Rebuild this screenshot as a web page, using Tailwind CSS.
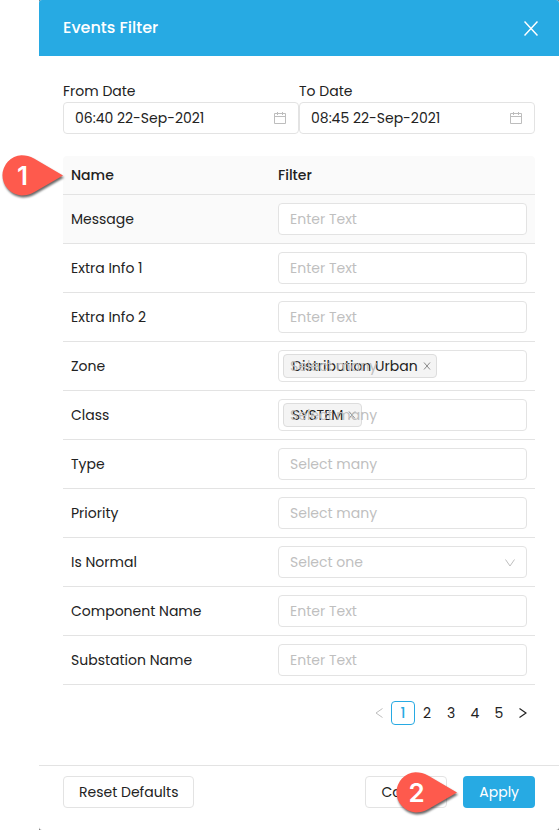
<!DOCTYPE html>
<html lang="en">
<head>
<meta charset="utf-8">
<meta name="viewport" content="width=device-width, initial-scale=1">
<title>Events Filter</title>
<script src="https://cdn.jsdelivr.net/npm/@tailwindcss/browser@4"></script>
</head>
<body class="bg-white pl-[39px] font-[Poppins,Inter,sans-serif] text-[14px] leading-[22px] text-[#222222]">
<svg class="hidden">
  <symbol id="calendar" viewBox="0 0 14 14"><path d="M1.500 2.500h11v10h-11zM1.500 5.500h11M4.500 1v3M9.500 1v3" fill="none" stroke="currentColor"/></symbol>
  <symbol id="close" viewBox="0 0 14 14"><path d="M.5 0 13.500 14M13.500 0 .5 14" fill="none" stroke="currentColor" stroke-width="1.500"/></symbol>
  <symbol id="remove" viewBox="0 0 8 8"><path d="M1 .5 7 7.500M7 .5 1 7.500" fill="none" stroke="currentColor"/></symbol>
  <symbol id="marker" viewBox="0 0 62 41"><path d="M62 20.500 33 37.200C29 39.500 25 40.500 20.500 40.500A20.500 20.200 0 0 1 20.500 .2C25 .2 29 1.300 33 3.500Z" fill="currentColor"/></symbol>
</svg>
<div class="bg-[#777777]">
<main class="flex min-h-screen flex-col overflow-hidden rounded-[3px] bg-white">
  <header class="flex h-14 items-center justify-between bg-[#27aae3] pr-[21px] pl-6 text-white">
    <h1 class="text-base font-medium">Events Filter</h1>
    <button type="button" aria-label="Close"><svg class="h-[15px] w-3.5"><use href="#close"/></svg></button>
  </header>

  <form class="flex grow flex-col">
    <div class="grow px-6 pt-6">
      <div class="grid grid-cols-2">
        <div>
          <label for="from" class="block">From Date</label>
          <div class="flex h-8 items-center rounded-[4px] border border-[#e3e3e3] px-[11px]">
            <input id="from" value="06:40 22-Sep-2021" class="min-w-0 grow outline-none">
            <svg class="size-3.5 shrink-0 text-[#bdbdbd]"><use href="#calendar"/></svg>
          </div>
        </div>
        <div>
          <label for="to" class="block">To Date</label>
          <div class="flex h-8 items-center rounded-[4px] border border-[#e3e3e3] px-[11px]">
            <input id="to" value="08:45 22-Sep-2021" class="min-w-0 grow outline-none">
            <svg class="size-3.5 shrink-0 text-[#bdbdbd]"><use href="#calendar"/></svg>
          </div>
        </div>
      </div>

      <div class="mt-[22px]">
        <table class="w-full table-fixed border-separate border-spacing-0 text-left [&_td]:h-[49px] [&_td]:border-b [&_td]:border-[#e3e3e3] [&_td]:px-2 [&_th]:border-b [&_th]:border-[#e3e3e3] [&_th]:px-2">
          <colgroup><col class="w-[207px]"><col></colgroup>
          <thead><tr class="h-[39px] bg-[#fafafa]"><th class="rounded-tl-[4px] font-medium">Name</th><th class="rounded-tr-[4px] font-medium">Filter</th></tr></thead>
          <tbody>
            <tr class="bg-[#fafafa]"><td><label for="message">Message</label></td><td><input id="message" placeholder="Enter Text" class="block h-8 w-full rounded-[4px] border border-[#e3e3e3] bg-white px-[11px] outline-none placeholder:text-[#bfbfbf]"></td></tr>
            <tr><td><label for="extra1">Extra Info 1</label></td><td><input id="extra1" placeholder="Enter Text" class="block h-8 w-full rounded-[4px] border border-[#e3e3e3] bg-white px-[11px] outline-none placeholder:text-[#bfbfbf]"></td></tr>
            <tr><td><label for="extra2">Extra Info 2</label></td><td><input id="extra2" placeholder="Enter Text" class="block h-8 w-full rounded-[4px] border border-[#e3e3e3] bg-white px-[11px] outline-none placeholder:text-[#bfbfbf]"></td></tr>
            <tr><td><label for="zone">Zone</label></td><td>
              <div class="relative flex h-8 items-center rounded-[4px] border border-[#e3e3e3] px-1">
                <span class="flex h-6 items-center gap-[5px] rounded-[4px] border border-[#dddddd] bg-[#f4f4f4] pr-[5px] pl-2">Distribution Urban<button type="button" aria-label="Remove Distribution Urban"><svg class="size-2 text-[#888888]"><use href="#remove"/></svg></button></span>
                <input id="zone" placeholder="Select many" class="pointer-events-none absolute inset-0 px-[11px] outline-none placeholder:text-[#bfbfbf]">
              </div></td></tr>
            <tr><td><label for="class">Class</label></td><td>
              <div class="relative flex h-8 items-center rounded-[4px] border border-[#e3e3e3] px-1">
                <span class="flex h-6 items-center gap-[5px] rounded-[4px] border border-[#dddddd] bg-[#f4f4f4] pr-[5px] pl-2">SYSTEM<button type="button" aria-label="Remove SYSTEM"><svg class="size-2 text-[#888888]"><use href="#remove"/></svg></button></span>
                <input id="class" placeholder="Select many" class="pointer-events-none absolute inset-0 px-[11px] outline-none placeholder:text-[#bfbfbf]">
              </div></td></tr>
            <tr><td><label for="type">Type</label></td><td><input id="type" placeholder="Select many" class="block h-8 w-full rounded-[4px] border border-[#e3e3e3] bg-white px-[11px] outline-none placeholder:text-[#bfbfbf]"></td></tr>
            <tr><td><label for="priority">Priority</label></td><td><input id="priority" placeholder="Select many" class="block h-8 w-full rounded-[4px] border border-[#e3e3e3] bg-white px-[11px] outline-none placeholder:text-[#bfbfbf]"></td></tr>
            <tr><td><label for="normal">Is Normal</label></td><td>
              <div class="relative">
                <select id="normal" class="block h-8 w-full appearance-none rounded-[4px] border border-[#e3e3e3] bg-white px-[11px] text-[#bfbfbf] outline-none"><option>Select one</option><option>Yes</option><option>No</option></select>
                <svg class="pointer-events-none absolute top-[13px] right-3 h-2 w-2.5 text-[#bfbfbf]" viewBox="0 0 10 8"><path d="M.5 .5 5 7 9.500 .5" fill="none" stroke="currentColor"/></svg>
              </div></td></tr>
            <tr><td><label for="component">Component Name</label></td><td><input id="component" placeholder="Enter Text" class="block h-8 w-full rounded-[4px] border border-[#e3e3e3] bg-white px-[11px] outline-none placeholder:text-[#bfbfbf]"></td></tr>
            <tr><td><label for="substation">Substation Name</label></td><td><input id="substation" placeholder="Enter Text" class="block h-8 w-full rounded-[4px] border border-[#e3e3e3] bg-white px-[11px] outline-none placeholder:text-[#bfbfbf]"></td></tr>
          </tbody>
        </table>
      </div>

      <nav aria-label="Pages" class="mt-4 flex justify-end [&>*]:flex [&>*]:size-6 [&>*]:items-center [&>*]:justify-center">
        <button type="button" disabled aria-label="Previous page" class="text-[#bfbfbf]"><svg class="h-2.5 w-2" viewBox="0 0 8 10"><path d="M7.500 .5 1 5 7.500 9.500" fill="none" stroke="currentColor"/></svg></button>
        <button type="button" class="rounded-[4px] border border-[#27aae3] font-medium text-[#27aae3]">1</button>
        <button type="button">2</button>
        <button type="button">3</button>
        <button type="button">4</button>
        <button type="button">5</button>
        <button type="button" aria-label="Next page"><svg class="h-2.5 w-2" viewBox="0 0 8 10"><path d="M.5 .5 7 5 .5 9.500" fill="none" stroke="currentColor" stroke-width="1.200"/></svg></button>
      </nav>
    </div>

    <footer class="flex h-[65px] justify-between border-t border-[#e3e3e3] px-6 pt-2.5">
      <button type="reset" class="h-8 rounded-[4px] border border-[#e3e3e3] px-[15px]">Reset Defaults</button>
      <div class="relative flex gap-4">
        <button type="button" class="h-8 rounded-[4px] border border-[#e3e3e3] px-[15px]">Cancel</button>
        <button type="submit" class="h-8 rounded-[4px] bg-[#27aae3] px-4 text-white">Apply</button>
        <div class="absolute -top-1 right-[78px] h-[41px] w-[62px] font-[Inter,sans-serif]">
          <svg class="size-full text-[#fe5a4d] drop-shadow-[1px_2px_1px_#00000099]"><use href="#marker"/></svg>
          <span class="absolute inset-y-0 left-0 flex w-[43px] items-center justify-center text-[26px] font-semibold text-white">2</span>
        </div>
      </div>
    </footer>
  </form>
</main>
</div>
<div class="absolute top-[155px] left-px h-[41px] w-[62px] font-[Inter,sans-serif]">
  <svg class="size-full text-[#fe5a4d] drop-shadow-[1px_2px_1px_#00000099]"><use href="#marker"/></svg>
  <span class="absolute inset-y-0 left-0 flex w-[43px] items-center justify-center text-[26px] font-semibold text-white">1</span>
</div>
</body>
</html>
